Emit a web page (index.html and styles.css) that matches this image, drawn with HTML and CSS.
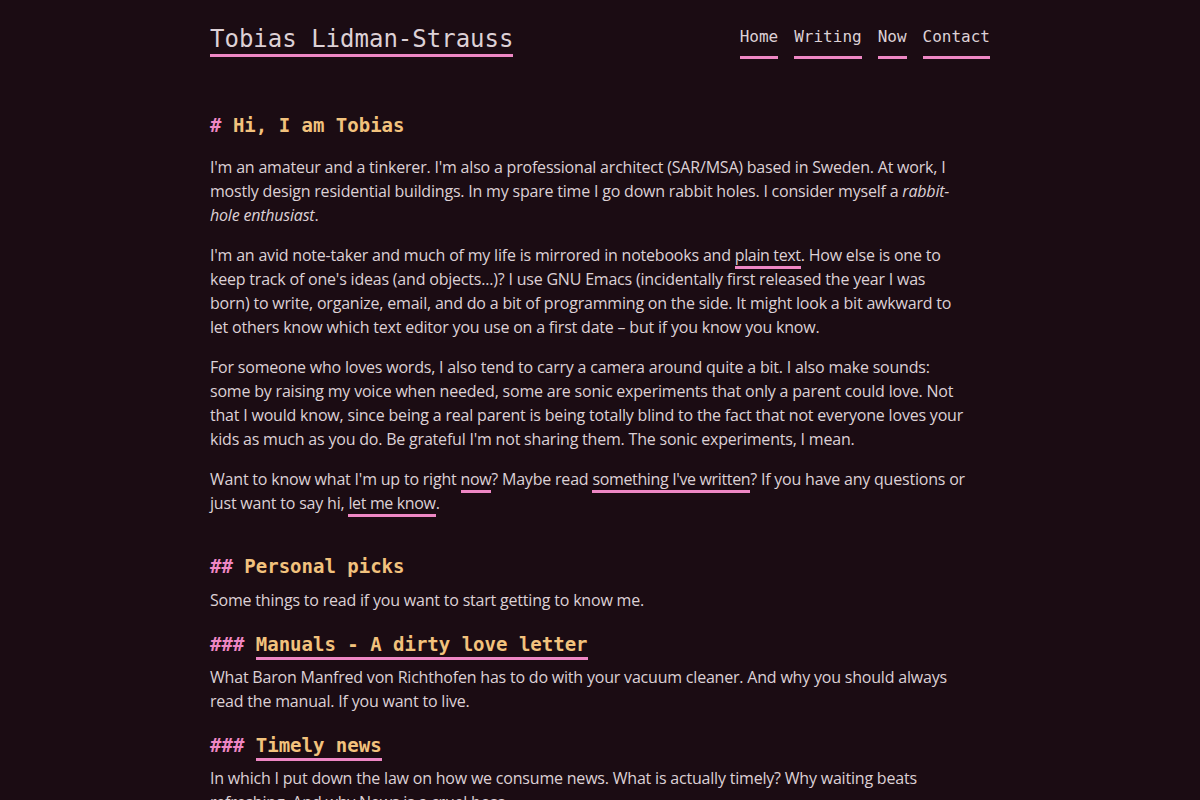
FILE: index.html
```html
<!DOCTYPE html>
<html lang="en">
<head>
    <meta charset="UTF-8">
    <meta name="viewport" content="width=device-width, initial-scale=1.0">
    <title>Tobias Lidman-Strauss</title>
    <link rel="stylesheet" href="styles.css">
</head>
<body>
    <div class="container">
        <header class="site-header">
            <a class="site-title" href="#">Tobias Lidman-Strauss</a>
            <nav class="site-nav">
                <a href="#">Home</a>
                <a href="#">Writing</a>
                <a href="#">Now</a>
                <a href="#">Contact</a>
            </nav>
        </header>

        <main>
            <h1><span class="mark">#</span> Hi, I am Tobias</h1>
            <p>I'm an amateur and a tinkerer. I'm also a professional architect (SAR/MSA) based in Sweden. At work, I mostly design residential buildings. In my spare time I go down rabbit holes. I consider myself a <em>rabbit-hole enthusiast</em>.</p>
            <p>I'm an avid note-taker and much of my life is mirrored in notebooks and <a href="#">plain text</a>. How else is one to keep track of one's ideas (and objects...)? I use GNU Emacs (incidentally first released the year I was born) to write, organize, email, and do a bit of programming on the side. It might look a bit awkward to let others know which text editor you use on a first date &ndash; but if you know you know.</p>
            <p>For someone who loves words, I also tend to carry a camera around quite a bit. I also make sounds: some by raising my voice when needed, some are sonic experiments that only a parent could love. Not that I would know, since being a real parent is being totally blind to the fact that not everyone loves your kids as much as you do. Be grateful I'm not sharing them. The sonic experiments, I mean.</p>
            <p>Want to know what I'm up to right <a href="#">now</a>? Maybe read <a href="#">something I've written</a>? If you have any questions or just want to say hi, <a href="#">let me know</a>.</p>

            <h2><span class="mark">##</span> Personal picks</h2>
            <p>Some things to read if you want to start getting to know me.</p>

            <h3><span class="mark">###</span> <a href="#">Manuals - A dirty love letter</a></h3>
            <p>What Baron Manfred von Richthofen has to do with your vacuum cleaner. And why you should always read the manual. If you want to live.</p>

            <h3><span class="mark">###</span> <a href="#">Timely news</a></h3>
            <p>In which I put down the law on how we consume news. What is actually timely? Why waiting beats refreshing. And why News is a cruel boss.</p>
        </main>
    </div>
</body>
</html>
```

FILE: styles.css
```css
body {
    margin: 0;
    background-color: #1b0c13;
    color: #ddd1d6;
    font-family: "Open Sans", "Noto Sans", sans-serif;
    font-size: 16px;
    line-height: 24px;
    letter-spacing: -0.2px;
}
a {
    color: inherit;
    text-decoration: none;
    border-bottom: 3px solid #ee87c4;
}
.container {
    width: 780px;
    margin: 0 auto;
}
.site-header {
    display: flex;
    justify-content: space-between;
    align-items: flex-start;
    padding-top: 24px;
    font-family: "DejaVu Sans Mono", "Liberation Mono", monospace;
    letter-spacing: 0;
}
.site-title {
    font-size: 24px;
    line-height: 30px;
}
.site-nav {
    display: flex;
    gap: 16px;
    font-size: 16px;
    line-height: 24px;
    padding-top: 1px;
}
.site-nav a {
    padding-bottom: 7px;
}
main {
    padding-top: 52px;
}
h1, h2, h3 {
    font-family: "DejaVu Sans Mono", "Liberation Mono", monospace;
    font-weight: bold;
    font-size: 19px;
    color: #f2c27d;
    line-height: 28px;
    letter-spacing: 0;
}
h1 {
    margin: 0 0 16px;
}
h2 {
    margin: 37px 0 8px;
}
h3 {
    margin: 18px 0 7px;
}
h3 a {
    padding-bottom: 2px;
}
.mark {
    color: #ee87c4;
}
p {
    max-width: 758px;
    margin: 0 0 16px;
}
p a {
    letter-spacing: -0.35px;
}
```
